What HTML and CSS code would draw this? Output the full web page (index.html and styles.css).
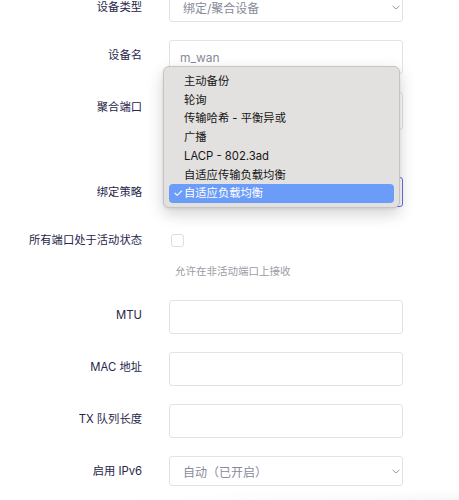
FILE: index.html
```html
<!DOCTYPE html>
<html lang="zh-CN">
<head>
<meta charset="utf-8">
<link rel="stylesheet" href="styles.css">
</head>
<body>
<div class="form">
  <div class="row">
    <div class="label">设备类型</div>
    <div class="select"><span class="val">绑定/聚合设备</span><svg class="chev" width="8" height="5" viewBox="0 0 8 5"><path d="M0.5 0.8 L4 4 L7.5 0.8" fill="none" stroke="#9aa0ad" stroke-width="1"/></svg></div>
  </div>
  <div class="row">
    <div class="label">设备名</div>
    <div class="input"><span class="val">m_wan</span></div>
  </div>
  <div class="row">
    <div class="label">聚合端口</div>
    <div class="input tall"></div>
  </div>
  <div class="row row-policy">
    <div class="label">绑定策略</div>
    <div class="ctrl">
      <div class="select focus"><span class="val"></span><svg class="chev" width="8" height="5" viewBox="0 0 8 5"><path d="M0.5 0.8 L4 4 L7.5 0.8" fill="none" stroke="#9aa0ad" stroke-width="1"/></svg></div>
      <div class="menu">
        <div class="item">主动备份</div>
        <div class="item">轮询</div>
        <div class="item">传输哈希 - 平衡异或</div>
        <div class="item">广播</div>
        <div class="item">LACP - 802.3ad</div>
        <div class="item">自适应传输负载均衡</div>
        <div class="item sel"><span class="check">✓</span>自适应负载均衡</div>
      </div>
    </div>
  </div>
  <div class="row row-check">
    <div class="label">所有端口处于活动状态</div>
    <div class="ctrl">
      <div class="checkline"><span class="checkbox"></span></div>
      <div class="help">允许在非活动端口上接收</div>
    </div>
  </div>
  <div class="row">
    <div class="label">MTU</div>
    <div class="input"></div>
  </div>
  <div class="row">
    <div class="label">MAC 地址</div>
    <div class="input"></div>
  </div>
  <div class="row">
    <div class="label">TX 队列长度</div>
    <div class="input"></div>
  </div>
  <div class="row">
    <div class="label">启用 IPv6</div>
    <div class="select"><span class="val">自动（已开启）</span><svg class="chev" width="8" height="5" viewBox="0 0 8 5"><path d="M0.5 0.8 L4 4 L7.5 0.8" fill="none" stroke="#9aa0ad" stroke-width="1"/></svg></div>
  </div>
  <div class="footer-shade"></div>
</div>
</body>
</html>
```

FILE: styles.css
```css
* { box-sizing: border-box; }
html, body {
  margin: 0;
  padding: 0;
  background: #ffffff;
  overflow: hidden;
}
body {
  font-family: "Inter", "Noto Sans CJK SC", sans-serif;
  color: #26264a;
}
.form {
  margin-top: -8px;
  width: 459px;
}
.row {
  display: grid;
  grid-template-columns: 142px 234px;
  column-gap: 27px;
  align-items: start;
  margin-bottom: 18px;
}
.label {
  text-align: right;
  font-size: 11.3px;
  line-height: 30px;
  color: #26264a;
  white-space: nowrap;
}
.select, .input {
  border: 1px solid #e3e3e6;
  border-radius: 3px;
  background: #fff;
  display: flex;
  align-items: center;
  color: #878b99;
  font-size: 12px;
}
.select {
  height: 30px;
  padding: 0 2px 0 13px;
  justify-content: space-between;
}
.input {
  height: 34px;
  padding: 0 10px;
}
.input.tall {
  height: 38px;
}
.row:nth-child(3) { margin-bottom: 47px; }
.select.focus {
  border-color: #5d6ee8;
}
.chev { display: block; }
.ctrl { position: relative; }
.menu {
  position: absolute;
  top: -111px;
  left: -6px;
  width: 237px;
  background: #e3e1df;
  border: 1px solid #c6c4c2;
  border-radius: 6px;
  padding: 5px 5px 4px 5px;
  box-shadow: 0 6px 16px rgba(0, 0, 0, 0.18), 0 1px 3px rgba(0, 0, 0, 0.08);
  z-index: 5;
}
.item {
  height: 18.72px;
  line-height: 18.72px;
  padding-left: 15px;
  font-size: 11.3px;
  color: #161616;
  white-space: nowrap;
  border-radius: 4px;
  position: relative;
}
.item.sel {
  background: #6a9cf8;
  color: #ffffff;
}
.check {
  position: absolute;
  left: 4px;
  top: 0;
  font-size: 11.5px;
  color: #ffffff;
}
.row-check { margin-bottom: 20px; }
.checkline {
  height: 30px;
  display: flex;
  align-items: center;
  padding-left: 2px;
}
.checkbox {
  display: block;
  width: 13px;
  height: 13px;
  border: 1px solid #dedee2;
  border-radius: 3px;
  background: #fff;
}
.help {
  margin-top: 9px;
  padding-left: 6px;
  font-size: 10.5px;
  line-height: 16px;
  color: #9a9ca6;
}
.footer-shade {
  height: 20px;
  margin-top: -14px;
  background: linear-gradient(to right, rgba(255,255,255,0) 30%, rgba(236,236,236,0.8) 100%);
  -webkit-mask-image: linear-gradient(to bottom, transparent, #000);
  mask-image: linear-gradient(to bottom, transparent, #000);
}
```
